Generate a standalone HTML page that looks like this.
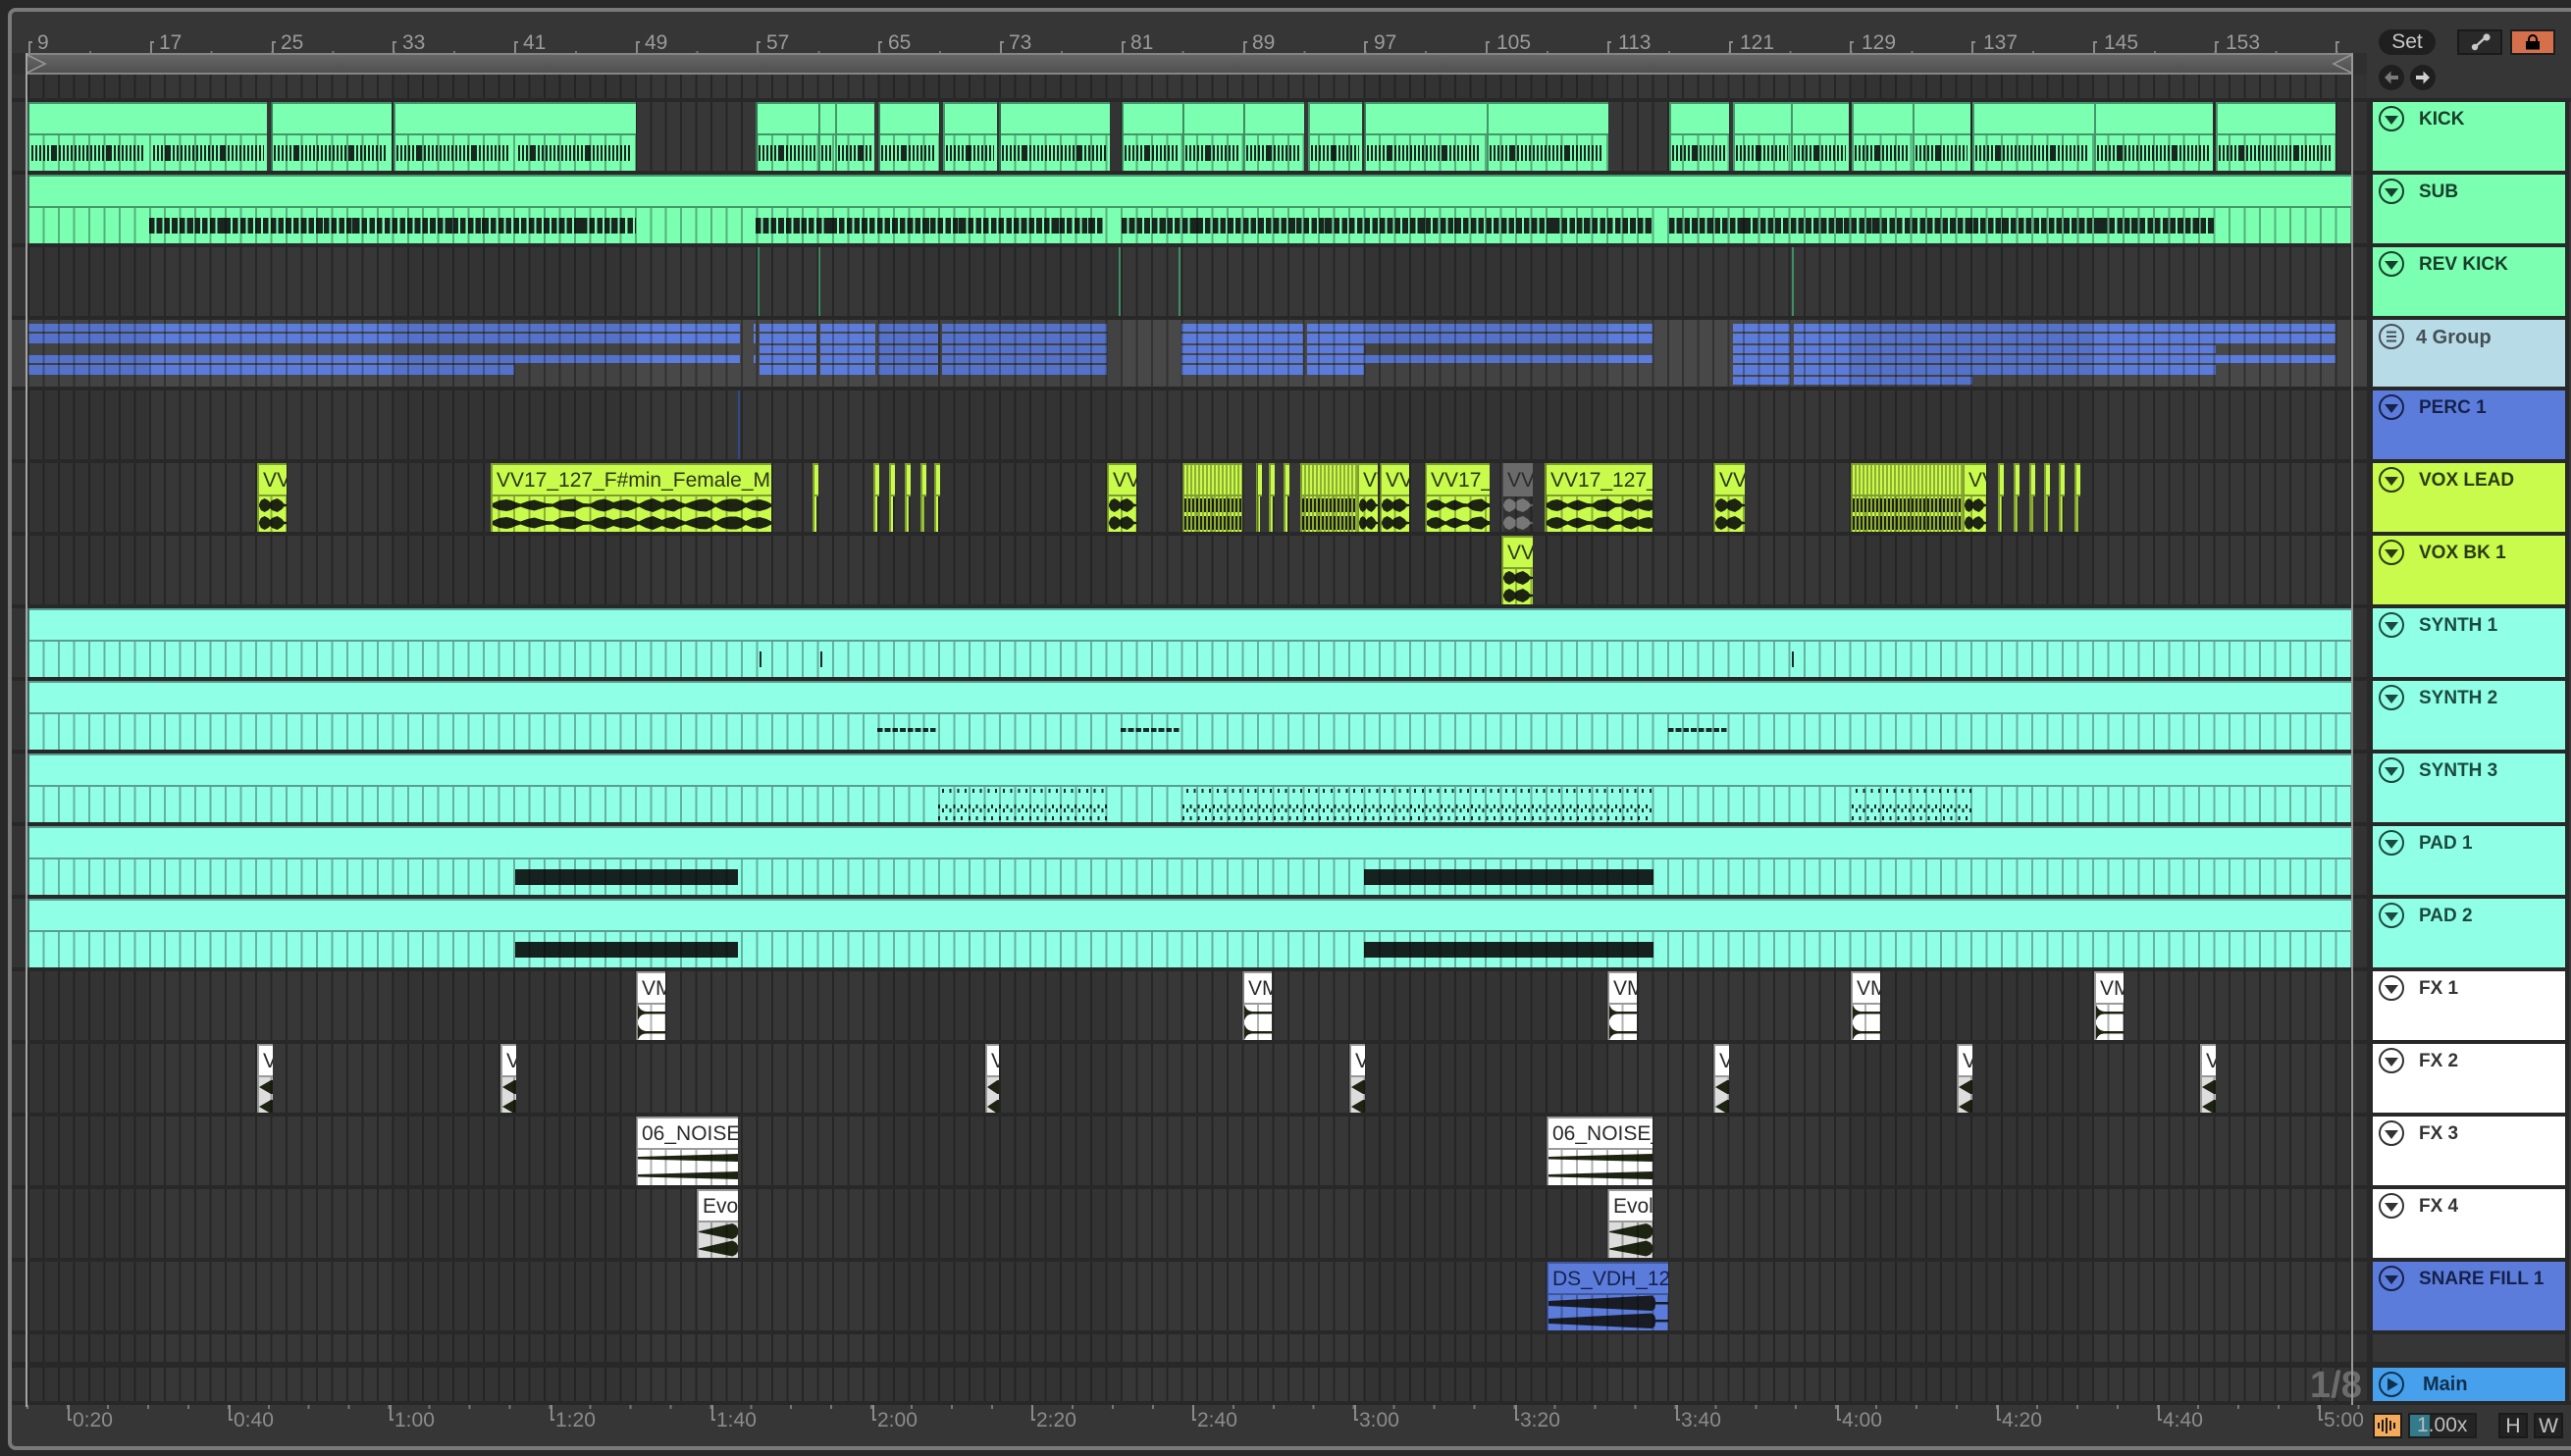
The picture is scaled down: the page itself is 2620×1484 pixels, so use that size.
<!DOCTYPE html>
<html><head><meta charset="utf-8"><title>Arrangement</title>
<style>
*{box-sizing:border-box;margin:0;padding:0}
html,body{width:2620px;height:1484px;overflow:hidden;background:#282828;font-family:"Liberation Sans",sans-serif}
.a,.row,.c,.t,.ov,.h,.k,.s,.tk,.bk,.lb,.kw,.v,.ds,.m,.seg{position:absolute}
.row{left:0;height:70px;width:2412px;background:repeating-linear-gradient(90deg,#333333 0 139.76px,#373737 139.76px 387.28px,#333333 387.28px 495.04px) 12px 0/2400px 100% no-repeat}
.ov{left:28px;width:2368px;top:0;bottom:0;z-index:1;background:repeating-linear-gradient(90deg,rgba(0,0,0,.3) 0 2px,transparent 2px 15.47px)}
.c{top:0;height:70px;background:var(--c);border-left:2px solid var(--d)}
.t{z-index:2;left:0;right:0;top:0;height:34px;background:var(--c);border-top:2px solid var(--d);border-bottom:2px solid var(--d);font-size:21px;font-weight:normal;line-height:31px;padding-left:4px;white-space:nowrap;overflow:hidden;color:var(--x)}
.g{--c:#7bffb0;--d:#46966b;--x:#1a3a2a}
.q{--c:#8fffe6;--d:#5a9e92;--x:#1a3a36}
.y{--c:#c8fb4c;--d:#7f9e30;--x:#2c3618}
.w{--c:#ffffff;--d:#9a9a9a;--x:#2a2a2a}
.u{--c:#5c7cdc;--d:#3f5699;--x:#14224a}
.z{--c:#333333;--d:#444444;--x:#2b2b2b}
.z .t{background:#6a6a6a;border-color:#6a6a6a}
.kw{left:1px;right:3px;top:44px;height:16px;background:repeating-linear-gradient(90deg,transparent 0 116px,#7bffb0 116px 123.76px),repeating-linear-gradient(90deg,transparent 0 20px,#18261f 20px 24px,transparent 24px 58px),repeating-linear-gradient(90deg,#18261f 0 2px,transparent 2px 4px)}
.sw{position:absolute;top:44px;height:16px;background:repeating-linear-gradient(90deg,transparent 0 9px,#18261f 9px 12px,transparent 12px 33px),repeating-linear-gradient(90deg,#18261f 0 5.6px,transparent 5.6px 7.735px)}
.v{left:0;top:34px;width:100%;height:36px;fill:#1e2412;display:block}
.den,.den .t{background:repeating-linear-gradient(90deg,#c8fb4c 0 2px,#8fae34 2px 4px)}
.ds{left:0;right:0;top:36px;height:32px;background:repeating-linear-gradient(90deg,#1e2412 0 2px,transparent 2px 4px) 0 0/100% 14px no-repeat,repeating-linear-gradient(90deg,#1e2412 0 2px,transparent 2px 4px) 0 18px/100% 14px no-repeat}
.m{background:#1a2a28}
.dash{position:absolute;top:48px;height:4px;background:repeating-linear-gradient(90deg,#1a2a28 0 5.6px,transparent 5.6px 7.735px)}
.dots{position:absolute;top:36px;height:32px;--p:repeating-linear-gradient(90deg,#1a2a28 0 2px,transparent 2px 7.735px);--r:repeating-linear-gradient(90deg,transparent 0 4px,#1a2a28 4px 6px,transparent 6px 7.735px);background:var(--r) 0 0/100% 4px no-repeat,var(--p) 0 16px/100% 4px no-repeat,var(--r) 0 20px/100% 4px no-repeat,var(--p) 0 28px/100% 4px no-repeat}
.solid{position:absolute;top:44px;height:16px;background:#16221f}
.seg{top:0;height:68px}
.A{background:linear-gradient(180deg,transparent 0 4px,#5c7cdc 4px 12px,transparent 12px 14px,#5c7cdc 14px 24px,transparent 24px 36px,#5c7cdc 36px 44px,transparent 44px)}
.B{background:linear-gradient(180deg,transparent 0 4px,#5c7cdc 4px 12px,transparent 12px 14px,#5c7cdc 14px 24px,transparent 24px 36px,#5c7cdc 36px 44px,transparent 44px 46px,#5c7cdc 46px 56px,transparent 56px)}
.C{background:linear-gradient(180deg,transparent 0 4px,#5c7cdc 4px 12px,transparent 12px 14px,#5c7cdc 14px 24px,transparent 24px 26px,#5c7cdc 26px 34px,transparent 34px 36px,#5c7cdc 36px 44px,transparent 44px 46px,#5c7cdc 46px 56px,transparent 56px)}
.D{background:linear-gradient(180deg,transparent 0 4px,#5c7cdc 4px 12px,transparent 12px 14px,#5c7cdc 14px 24px,transparent 24px 26px,#5c7cdc 26px 34px,transparent 34px 36px,#5c7cdc 36px 44px,transparent 44px 46px,#5c7cdc 46px 56px,transparent 56px 58px,#5c7cdc 58px 66px,transparent 66px)}
.h{left:2418px;width:196px;height:70px;font-weight:bold;font-size:19px;line-height:36px;white-space:nowrap}
.h span{position:absolute;left:47px;top:0}
.h svg{position:absolute;left:6px;top:4px}
.tk{top:42px;width:4px;height:12px;border-left:2px solid #8a8a8a;border-top:2px solid #8a8a8a}
.lb{top:31px;font-size:21px;line-height:26px;color:#9b9b9b}
.bk{top:1432px;width:4px;height:16px;border-left:2px solid #8a8a8a;border-bottom:2px solid #8a8a8a}
.tm{position:absolute;top:1435px;font-size:21px;line-height:26px;color:#8c8c8c}
.bt{position:absolute;background:#222;border:2px solid #1a1a1a;color:#c4c4c4;font-size:21px;text-align:center;line-height:23px}
</style></head><body>
<svg width="0" height="0" style="position:absolute"><defs>
<path id="lp" d="M0 6L3 3 6 2 8 3 10 5 12 6.500 15 4 18 2.500 20 4 23 6 26 6.500 29 3 32 2 35 1.500 37 4 39 6 42 6.500 45 3 48 1.500 50 3 52 5 55 3 58 2 60 3.500 63 6.500 66 3 69 1 71 3 73 5 75 3 78 1.500 80 4 83 6.500 86 4 89 2 92 1.500 94 3.500 96 6.500 99 3 102 1.500 105 1.500 107 3 109 6 112 3 115 2 118 4 120 6.500V9.500L118 12 115 14 112 13 109 10 107 13 105 14.500 102 14.500 99 13 96 9.500 94 12.500 92 14.500 89 14 86 12 83 9.500 80 12 78 14.500 75 13 73 11 71 13 69 15 66 13 63 9.500 60 12.500 58 14 55 13 52 11 50 13 48 14.500 45 13 42 9.500 39 10 37 12 35 14.500 32 14 29 13 26 9.500 23 10 20 12 18 13.500 15 12 12 9.500 10 11 8 13 6 14 3 13 0 10Z"/>
<g id="l"><use href="#lp" y="1"/><use href="#lp" y="19"/></g>
<path id="sp" d="M0 8L2 4 6 2 10 4 12 6 14 4 20 2 25 5 27 7.500 30 8V10L27 10.500 25 13 20 16 14 14 12 12 10 14 6 16 2 14 0 10Z"/>
<g id="s"><use href="#sp"/><use href="#sp" y="18"/></g>
<path id="f1p" d="M0 0C2 4 3 6 9 7H30V9.500H9C3 10 2 12 0 16Z"/>
<g id="f1"><use href="#f1p"/><use href="#f1p" y="20"/></g>
<path id="f2p" d="M0 10L12 3 14 3V17L12 17Z"/>
<g id="f2"><use href="#f2p"/><use href="#f2p" y="20"/></g>
<path id="f3p" d="M0 7L104 4V12L0 9.500Z"/>
<g id="f3"><use href="#f3p"/><use href="#f3p" y="18"/></g>
<path id="f4p" d="M0 9L36 1 40 3 42 6V12L40 15 36 17 0 10Z"/>
<g id="f4"><use href="#f4p"/><use href="#f4p" y="17.500"/></g>
<path id="f5p" d="M0 6L107 .5 110 3 111 7H124V9.500H111L110 14 107 16 0 11Z"/>
<g id="f5"><use href="#f5p"/><use href="#f5p" y="18"/></g>
<g id="dn" fill="currentColor"><circle cx="13" cy="13" r="12" fill="none" stroke="currentColor" stroke-width="2"/><path d="M6 10h14l-7 9z"/></g>
<g id="pl" fill="currentColor"><circle cx="13" cy="13" r="12" fill="none" stroke="currentColor" stroke-width="2"/><path d="M9 6.500l11 6.500-11 6.500z"/></g>
<g id="gr" fill="currentColor"><circle cx="13" cy="13" r="12" fill="none" stroke="currentColor" stroke-width="2"/><path d="M8 7.500h10v2H8zM8 12h10v2H8zM8 16.500h10v2H8z"/></g>
</defs></svg>

<!-- frame -->
<div class="a" style="left:8px;top:8px;width:2620px;height:1470px;background:#363636;border:4px solid #7a7a7a;border-radius:8px 0 0 8px"></div>
<div class="a" style="left:12px;top:100px;width:2608px;height:1332px;background:#282828"></div>
<div class="a" style="left:2618px;top:104px;width:2px;height:1324px;background:#363636"></div>
<div class="a" style="left:12px;top:54px;width:2400px;height:46px;background:#2f2f2f"></div>

<!-- top ruler -->
<div class="a" style="left:29px;top:52px;width:2367px;height:2px;background:repeating-linear-gradient(90deg,#777 0 2px,transparent 2px 61.88px)"></div>
<i class="tk" style="left:29px"></i><span class="lb" style="left:38px">9</span>
<i class="tk" style="left:153px"></i><span class="lb" style="left:162px">17</span>
<i class="tk" style="left:277px"></i><span class="lb" style="left:286px">25</span>
<i class="tk" style="left:400px"></i><span class="lb" style="left:410px">33</span>
<i class="tk" style="left:524px"></i><span class="lb" style="left:533px">41</span>
<i class="tk" style="left:648px"></i><span class="lb" style="left:657px">49</span>
<i class="tk" style="left:771px"></i><span class="lb" style="left:781px">57</span>
<i class="tk" style="left:895px"></i><span class="lb" style="left:905px">65</span>
<i class="tk" style="left:1019px"></i><span class="lb" style="left:1028px">73</span>
<i class="tk" style="left:1143px"></i><span class="lb" style="left:1152px">81</span>
<i class="tk" style="left:1267px"></i><span class="lb" style="left:1276px">89</span>
<i class="tk" style="left:1390px"></i><span class="lb" style="left:1400px">97</span>
<i class="tk" style="left:1514px"></i><span class="lb" style="left:1525px">105</span>
<i class="tk" style="left:1638px"></i><span class="lb" style="left:1649px">113</span>
<i class="tk" style="left:1762px"></i><span class="lb" style="left:1773px">121</span>
<i class="tk" style="left:1885px"></i><span class="lb" style="left:1897px">129</span>
<i class="tk" style="left:2009px"></i><span class="lb" style="left:2021px">137</span>
<i class="tk" style="left:2133px"></i><span class="lb" style="left:2144px">145</span>
<i class="tk" style="left:2257px"></i><span class="lb" style="left:2268px">153</span>
<i class="tk" style="left:2380px"></i>

<!-- loop bar -->
<div class="a" style="left:28px;top:54px;width:2370px;height:22px;background:linear-gradient(#666,#505050);border-top:2px solid #858585;border-bottom:2px solid #858585"></div>
<svg class="a" style="left:26px;top:54px" width="2372" height="22" fill="none" stroke="#949494" stroke-width="1.6"><path d="M2 2L20 11 2 20"/><path d="M2370 2L2352 11 2370 20"/></svg>

<!-- rows -->
<div class="row" style="top:76px;height:24px"><i class="ov"></i></div>

<div class="row" style="top:104px">
<div class="c g" style="left:28px;width:244px"><b class="t"></b><i class="kw" style="left:2px"></i></div>
<div class="c g" style="left:276px;width:123px"><b class="t"></b><i class="kw"></i></div>
<div class="c g" style="left:401px;width:247px"><b class="t"></b><i class="kw"></i></div>
<div class="c g" style="left:770px;width:64px"><b class="t"></b><i class="kw"></i></div>
<div class="c g" style="left:834px;width:17px"><b class="t"></b><i class="kw"></i></div>
<div class="c g" style="left:851px;width:40px"><b class="t"></b><i class="kw"></i></div>
<div class="c g" style="left:895px;width:62px"><b class="t"></b><i class="kw"></i></div>
<div class="c g" style="left:961px;width:55px"><b class="t"></b><i class="kw"></i></div>
<div class="c g" style="left:1018px;width:113px"><b class="t"></b><i class="kw"></i></div>
<div class="c g" style="left:1143px;width:62px"><b class="t"></b><i class="kw"></i></div>
<div class="c g" style="left:1205px;width:62px"><b class="t"></b><i class="kw"></i></div>
<div class="c g" style="left:1267px;width:62px"><b class="t"></b><i class="kw"></i></div>
<div class="c g" style="left:1333px;width:55px"><b class="t"></b><i class="kw"></i></div>
<div class="c g" style="left:1390px;width:125px"><b class="t"></b><i class="kw"></i></div>
<div class="c g" style="left:1515px;width:124px"><b class="t"></b><i class="kw"></i></div>
<div class="c g" style="left:1701px;width:61px"><b class="t"></b><i class="kw"></i></div>
<div class="c g" style="left:1766px;width:59px"><b class="t"></b><i class="kw"></i></div>
<div class="c g" style="left:1825px;width:59px"><b class="t"></b><i class="kw"></i></div>
<div class="c g" style="left:1887px;width:62px"><b class="t"></b><i class="kw"></i></div>
<div class="c g" style="left:1949px;width:59px"><b class="t"></b><i class="kw"></i></div>
<div class="c g" style="left:2010px;width:124px"><b class="t"></b><i class="kw"></i></div>
<div class="c g" style="left:2134px;width:121px"><b class="t"></b><i class="kw"></i></div>
<div class="c g" style="left:2258px;width:122px"><b class="t"></b><i class="kw"></i></div>
<i class="ov"></i></div>

<div class="row" style="top:178px">
<div class="c g" style="left:28px;width:2368px"><b class="t"></b></div>
<i class="sw" style="left:152px;width:496px"></i><i class="sw" style="left:770px;width:356px"></i><i class="sw" style="left:1143px;width:541px"></i><i class="sw" style="left:1701px;width:555px"></i>
<i class="ov"></i></div>

<div class="row" style="top:252px">
<i class="m" style="left:772px;top:0;width:2px;height:70px;background:#3f8f64"></i>
<i class="m" style="left:834px;top:0;width:2px;height:70px;background:#3f8f64"></i>
<i class="m" style="left:1140px;top:0;width:2px;height:70px;background:#3f8f64"></i>
<i class="m" style="left:1201px;top:0;width:2px;height:70px;background:#3f8f64"></i>
<i class="m" style="left:1826px;top:0;width:2px;height:70px;background:#3f8f64"></i>
<i class="ov"></i></div>

<div class="row" style="top:326px;height:68px;background:linear-gradient(#484848,#484848) 12px 0/2400px 100% no-repeat">
<i class="seg B" style="left:29px;width:495px"></i>
<i class="seg A" style="left:524px;width:230px"></i>
<i class="seg A" style="left:768px;width:2px"></i>
<i class="seg C" style="left:774px;width:58px"></i>
<i class="seg C" style="left:836px;width:56px"></i>
<i class="seg C" style="left:895px;width:61px"></i>
<i class="seg C" style="left:960px;width:168px"></i>
<i class="seg C" style="left:1204px;width:124px"></i>
<i class="seg C" style="left:1332px;width:58px"></i>
<i class="seg A" style="left:1390px;width:294px"></i>
<i class="seg D" style="left:1766px;width:58px"></i>
<i class="seg D" style="left:1828px;width:182px"></i>
<i class="seg C" style="left:2010px;width:248px"></i>
<i class="seg A" style="left:2258px;width:122px"></i>
<i class="a" style="left:12px;top:0;width:2400px;height:68px;z-index:1;background:repeating-linear-gradient(90deg,rgba(0,0,0,.08) 0 139.76px,transparent 139.76px 387.28px,rgba(0,0,0,.08) 387.28px 495.04px)"></i>
<i class="ov"></i></div>

<div class="row" style="top:398px"><i class="m" style="left:752px;top:0;width:2px;height:70px;background:#2f4a86"></i><i class="ov"></i></div>

<div class="row" style="top:472px">
<div class="c y" style="left:262px;width:30px"><b class="t">VV</b><svg class="v" viewBox="0 0 30 36" preserveAspectRatio="none"><use href="#s"/></svg></div>
<div class="c y" style="left:500px;width:286px"><b class="t">VV17_127_F#min_Female_M</b><svg class="v" viewBox="0 0 120 36" preserveAspectRatio="none"><use href="#l"/></svg></div>
<div class="c y" style="left:828px;width:4px"><b class="t"></b></div>
<div class="c y" style="left:890px;width:4px"><b class="t"></b></div>
<div class="c y" style="left:906px;width:4px"><b class="t"></b></div>
<div class="c y" style="left:922px;width:4px"><b class="t"></b></div>
<div class="c y" style="left:938px;width:4px"><b class="t"></b></div>
<div class="c y" style="left:952px;width:4px"><b class="t"></b></div>
<div class="c y" style="left:1128px;width:30px"><b class="t">VV</b><svg class="v" viewBox="0 0 30 36" preserveAspectRatio="none"><use href="#s"/></svg></div>
<div class="c y den" style="left:1205px;width:61px"><b class="t"></b><i class="ds"></i></div>
<div class="c y" style="left:1280px;width:4px"><b class="t"></b></div>
<div class="c y" style="left:1293px;width:4px"><b class="t"></b></div>
<div class="c y" style="left:1308px;width:4px"><b class="t"></b></div>
<div class="c y den" style="left:1325px;width:58px"><b class="t"></b><i class="ds"></i></div>
<div class="c y" style="left:1383px;width:21px"><b class="t">VV</b><svg class="v" viewBox="0 0 30 36" preserveAspectRatio="none"><use href="#s"/></svg></div>
<div class="c y" style="left:1406px;width:30px"><b class="t">VV</b><svg class="v" viewBox="0 0 30 36" preserveAspectRatio="none"><use href="#s"/></svg></div>
<div class="c y" style="left:1452px;width:66px"><b class="t">VV17_127_F</b><svg class="v" viewBox="0 0 40 36" preserveAspectRatio="none"><use href="#l"/></svg></div>
<div class="c z" style="left:1530px;width:32px"><b class="t">VV</b><svg class="v" viewBox="0 0 30 36" preserveAspectRatio="none" style="fill:#777"><use href="#s"/></svg></div>
<div class="c y" style="left:1574px;width:110px"><b class="t">VV17_127_F#min</b><svg class="v" viewBox="0 0 60 36" preserveAspectRatio="none"><use href="#l"/></svg></div>
<div class="c y" style="left:1746px;width:32px"><b class="t">VV</b><svg class="v" viewBox="0 0 30 36" preserveAspectRatio="none"><use href="#s"/></svg></div>
<div class="c y den" style="left:1886px;width:114px"><b class="t"></b><i class="ds"></i></div>
<div class="c y" style="left:2000px;width:24px"><b class="t">VV</b><svg class="v" viewBox="0 0 30 36" preserveAspectRatio="none"><use href="#s"/></svg></div>
<div class="c y" style="left:2036px;width:4px"><b class="t"></b></div>
<div class="c y" style="left:2052px;width:4px"><b class="t"></b></div>
<div class="c y" style="left:2068px;width:4px"><b class="t"></b></div>
<div class="c y" style="left:2083px;width:4px"><b class="t"></b></div>
<div class="c y" style="left:2098px;width:4px"><b class="t"></b></div>
<div class="c y" style="left:2114px;width:4px"><b class="t"></b></div>
<i class="ov"></i></div>

<div class="row" style="top:546px">
<div class="c y" style="left:1530px;width:32px"><b class="t">VV</b><svg class="v" viewBox="0 0 30 36" preserveAspectRatio="none"><use href="#s"/></svg></div>
<i class="ov"></i></div>

<div class="row" style="top:620px">
<div class="c q" style="left:28px;width:2368px"><b class="t"></b></div>
<i class="m" style="left:774px;top:44px;width:2px;height:16px"></i><i class="m" style="left:836px;top:44px;width:2px;height:16px"></i><i class="m" style="left:1826px;top:44px;width:2px;height:16px"></i>
<i class="ov"></i></div>

<div class="row" style="top:694px">
<div class="c q" style="left:28px;width:2368px"><b class="t"></b></div>
<i class="dash" style="left:894px;width:62px"></i><i class="dash" style="left:1142px;width:62px"></i><i class="dash" style="left:1700px;width:62px"></i>
<i class="ov"></i></div>

<div class="row" style="top:768px">
<div class="c q" style="left:28px;width:2368px"><b class="t"></b></div>
<i class="dots" style="left:956px;width:172px"></i><i class="dots" style="left:1205px;width:479px"></i><i class="dots" style="left:1887px;width:123px"></i>
<i class="ov"></i></div>

<div class="row" style="top:842px">
<div class="c q" style="left:28px;width:2368px"><b class="t"></b></div>
<i class="solid" style="left:525px;width:227px"></i><i class="solid" style="left:1390px;width:295px"></i>
<i class="ov"></i></div>

<div class="row" style="top:916px">
<div class="c q" style="left:28px;width:2368px"><b class="t"></b></div>
<i class="solid" style="left:525px;width:227px"></i><i class="solid" style="left:1390px;width:295px"></i>
<i class="ov"></i></div>

<div class="row" style="top:990px">
<div class="c w" style="left:648px;width:30px"><b class="t">VM</b><svg class="v" viewBox="0 0 30 36" preserveAspectRatio="none"><use href="#f1"/></svg></div>
<div class="c w" style="left:1266px;width:30px"><b class="t">VM</b><svg class="v" viewBox="0 0 30 36" preserveAspectRatio="none"><use href="#f1"/></svg></div>
<div class="c w" style="left:1638px;width:30px"><b class="t">VM</b><svg class="v" viewBox="0 0 30 36" preserveAspectRatio="none"><use href="#f1"/></svg></div>
<div class="c w" style="left:1886px;width:30px"><b class="t">VM</b><svg class="v" viewBox="0 0 30 36" preserveAspectRatio="none"><use href="#f1"/></svg></div>
<div class="c w" style="left:2134px;width:30px"><b class="t">VM</b><svg class="v" viewBox="0 0 30 36" preserveAspectRatio="none"><use href="#f1"/></svg></div>
<i class="ov"></i></div>

<div class="row" style="top:1064px">
<div class="c w" style="left:262px;width:16px;background:#ddd"><b class="t">V</b><svg class="v" viewBox="0 0 14 36" preserveAspectRatio="none"><use href="#f2"/></svg></div>
<div class="c w" style="left:510px;width:16px;background:#ddd"><b class="t">V</b><svg class="v" viewBox="0 0 14 36" preserveAspectRatio="none"><use href="#f2"/></svg></div>
<div class="c w" style="left:1004px;width:14px;background:#ddd"><b class="t">V</b><svg class="v" viewBox="0 0 14 36" preserveAspectRatio="none"><use href="#f2"/></svg></div>
<div class="c w" style="left:1375px;width:16px;background:#ddd"><b class="t">V</b><svg class="v" viewBox="0 0 14 36" preserveAspectRatio="none"><use href="#f2"/></svg></div>
<div class="c w" style="left:1746px;width:16px;background:#ddd"><b class="t">V</b><svg class="v" viewBox="0 0 14 36" preserveAspectRatio="none"><use href="#f2"/></svg></div>
<div class="c w" style="left:1994px;width:16px;background:#ddd"><b class="t">V</b><svg class="v" viewBox="0 0 14 36" preserveAspectRatio="none"><use href="#f2"/></svg></div>
<div class="c w" style="left:2242px;width:16px;background:#ddd"><b class="t">V</b><svg class="v" viewBox="0 0 14 36" preserveAspectRatio="none"><use href="#f2"/></svg></div>
<i class="ov"></i></div>

<div class="row" style="top:1138px">
<div class="c w" style="left:648px;width:104px"><b class="t">06_NOISE_</b><svg class="v" viewBox="0 0 104 36" preserveAspectRatio="none"><use href="#f3"/></svg></div>
<div class="c w" style="left:1576px;width:108px"><b class="t">06_NOISE_</b><svg class="v" viewBox="0 0 104 36" preserveAspectRatio="none"><use href="#f3"/></svg></div>
<i class="ov"></i></div>

<div class="row" style="top:1212px">
<div class="c w" style="left:710px;width:42px;background:#dcdcdc"><b class="t">Evo</b><svg class="v" viewBox="0 0 42 36" preserveAspectRatio="none"><use href="#f4"/></svg></div>
<div class="c w" style="left:1638px;width:46px;background:#dcdcdc"><b class="t">Evol</b><svg class="v" viewBox="0 0 42 36" preserveAspectRatio="none"><use href="#f4"/></svg></div>
<i class="ov"></i></div>

<div class="row" style="top:1286px">
<div class="c u" style="left:1576px;width:124px"><b class="t">DS_VDH_126</b><svg class="v" viewBox="0 0 124 36" preserveAspectRatio="none" style="fill:#1a1c24"><use href="#f5"/></svg></div>
<i class="ov"></i></div>

<div class="row" style="top:1360px;height:28px"><i class="ov"></i></div>
<div class="row" style="top:1394px;height:34px"><i class="ov"></i></div>

<!-- bottom ruler -->
<div class="a" style="left:27px;top:1432px;width:2385px;height:4px;background:repeating-linear-gradient(90deg,#777 0 2px,transparent 2px 40.96px)"></div>
<i class="bk" style="left:69px"></i><span class="tm" style="left:74px">0:20</span>
<i class="bk" style="left:233px"></i><span class="tm" style="left:238px">0:40</span>
<i class="bk" style="left:397px"></i><span class="tm" style="left:402px">1:00</span>
<i class="bk" style="left:561px"></i><span class="tm" style="left:566px">1:20</span>
<i class="bk" style="left:725px"></i><span class="tm" style="left:730px">1:40</span>
<i class="bk" style="left:889px"></i><span class="tm" style="left:894px">2:00</span>
<i class="bk" style="left:1051px"></i><span class="tm" style="left:1056px">2:20</span>
<i class="bk" style="left:1215px"></i><span class="tm" style="left:1220px">2:40</span>
<i class="bk" style="left:1380px"></i><span class="tm" style="left:1385px">3:00</span>
<i class="bk" style="left:1544px"></i><span class="tm" style="left:1549px">3:20</span>
<i class="bk" style="left:1708px"></i><span class="tm" style="left:1713px">3:40</span>
<i class="bk" style="left:1872px"></i><span class="tm" style="left:1877px">4:00</span>
<i class="bk" style="left:2035px"></i><span class="tm" style="left:2040px">4:20</span>
<i class="bk" style="left:2199px"></i><span class="tm" style="left:2204px">4:40</span>
<i class="bk" style="left:2363px"></i><span class="tm" style="left:2368px">5:00</span>

<div class="a" style="left:2354px;top:1393px;font-size:38px;line-height:38px;font-weight:bold;color:#6c6c6c;z-index:4">1/8</div>

<!-- locator lines -->
<div class="a" style="left:26px;top:54px;width:2px;height:1380px;background:#a4a4a4;z-index:5"></div>
<div class="a" style="left:2396px;top:54px;width:2px;height:1378px;background:#999;z-index:5"></div>

<!-- track headers -->
<div class="h" style="top:104px;background:#7bffb0;color:#17402c"><svg width="26" height="26"><use href="#dn"/></svg><span>KICK</span></div>
<div class="h" style="top:178px;background:#7bffb0;color:#17402c"><svg width="26" height="26"><use href="#dn"/></svg><span>SUB</span></div>
<div class="h" style="top:252px;background:#7bffb0;color:#17402c"><svg width="26" height="26"><use href="#dn"/></svg><span>REV KICK</span></div>
<div class="h" style="top:326px;height:68px;background:#b7dbe7;color:#454f55;font-size:20px"><svg width="26" height="26"><use href="#gr"/></svg><span style="left:44px">4 Group</span></div>
<div class="h" style="top:398px;background:#5c7cdc;color:#16224a"><svg width="26" height="26"><use href="#dn"/></svg><span>PERC 1</span></div>
<div class="h" style="top:472px;background:#c8fb4c;color:#2c3a14"><svg width="26" height="26"><use href="#dn"/></svg><span>VOX LEAD</span></div>
<div class="h" style="top:546px;background:#c8fb4c;color:#2c3a14"><svg width="26" height="26"><use href="#dn"/></svg><span>VOX BK 1</span></div>
<div class="h" style="top:620px;background:#8fffe6;color:#1c4a40"><svg width="26" height="26"><use href="#dn"/></svg><span>SYNTH 1</span></div>
<div class="h" style="top:694px;background:#8fffe6;color:#1c4a40"><svg width="26" height="26"><use href="#dn"/></svg><span>SYNTH 2</span></div>
<div class="h" style="top:768px;background:#8fffe6;color:#1c4a40"><svg width="26" height="26"><use href="#dn"/></svg><span>SYNTH 3</span></div>
<div class="h" style="top:842px;background:#8fffe6;color:#1c4a40"><svg width="26" height="26"><use href="#dn"/></svg><span>PAD 1</span></div>
<div class="h" style="top:916px;background:#8fffe6;color:#1c4a40"><svg width="26" height="26"><use href="#dn"/></svg><span>PAD 2</span></div>
<div class="h" style="top:990px;background:#fff;color:#333"><svg width="26" height="26"><use href="#dn"/></svg><span>FX 1</span></div>
<div class="h" style="top:1064px;background:#fff;color:#333"><svg width="26" height="26"><use href="#dn"/></svg><span>FX 2</span></div>
<div class="h" style="top:1138px;background:#fff;color:#333"><svg width="26" height="26"><use href="#dn"/></svg><span>FX 3</span></div>
<div class="h" style="top:1212px;background:#fff;color:#333"><svg width="26" height="26"><use href="#dn"/></svg><span>FX 4</span></div>
<div class="h" style="top:1286px;background:#5c7cdc;color:#16224a"><svg width="26" height="26"><use href="#dn"/></svg><span>SNARE FILL 1</span></div>
<div class="a" style="left:2418px;top:1360px;width:196px;height:28px;background:#363636"></div>
<div class="h" style="top:1394px;height:34px;background:#47a0ec;color:#10304e;font-size:20px;line-height:35px"><svg width="26" height="26"><use href="#pl"/></svg><span style="left:51px">Main</span></div>

<!-- top right controls -->
<div class="a" style="left:2424px;top:30px;width:58px;height:26px;border-radius:13px;background:#1f1f1f;color:#c9c9c9;font-size:21px;line-height:26px;text-align:center">Set</div>
<div class="a" style="left:2504px;top:30px;width:46px;height:26px;background:#292929;border:2px solid #1a1a1a"></div>
<svg class="a" style="left:2504px;top:30px" width="46" height="26"><path d="M18 18L29 8" stroke="#c8c8c8" stroke-width="2.4"/><circle cx="18" cy="18" r="3.2" fill="#c8c8c8"/><circle cx="30" cy="8" r="3.6" fill="#c8c8c8"/></svg>
<div class="a" style="left:2558px;top:30px;width:46px;height:26px;background:#d6704c;border:2px solid #1d1d1d"></div>
<svg class="a" style="left:2558px;top:30px" width="46" height="26"><rect x="16" y="12" width="14" height="8.5" fill="#000"/><path d="M19 12V10a4 4 0 0 1 8 0v2" fill="none" stroke="#000" stroke-width="2"/></svg>
<svg class="a" style="left:2424px;top:66px" width="26" height="26"><circle cx="13" cy="13" r="13" fill="#1f1f1f"/><path d="M6 13l6.500-6.500v4.500H20v4h-7.500v4.500z" fill="#7a7a7a"/></svg>
<svg class="a" style="left:2456px;top:66px" width="26" height="26"><circle cx="13" cy="13" r="13" fill="#1f1f1f"/><path d="M20 13l-6.500-6.500v4.500H6v4h7.500v4.500z" fill="#d2d2d2"/></svg>

<!-- bottom right controls -->
<div class="a" style="left:2418px;top:1440px;width:30px;height:26px;background:#f3aa5a;border:2px solid #1d1d1d"></div>
<svg class="a" style="left:2418px;top:1440px" width="30" height="26"><path d="M5 10h2v6H5zM9 7h2v12H9zM13 5h2v16h-2zM17 8h2v10h-2zM21 10h2v6h-2z" fill="#1a1a1a"/></svg>
<div class="a" style="left:2454px;top:1440px;width:70px;height:26px;background:#242424;border:2px solid #1d1d1d"></div>
<div class="a" style="left:2456px;top:1442px;width:20px;height:22px;background:#337a8b"></div>
<div class="a" style="left:2463px;top:1440px;font-size:21px;line-height:26px;color:#bdbdbd">1.00x</div>
<div class="bt" style="left:2546px;top:1440px;width:30px;height:26px">H</div>
<div class="bt" style="left:2582px;top:1440px;width:30px;height:26px">W</div>
</body></html>
